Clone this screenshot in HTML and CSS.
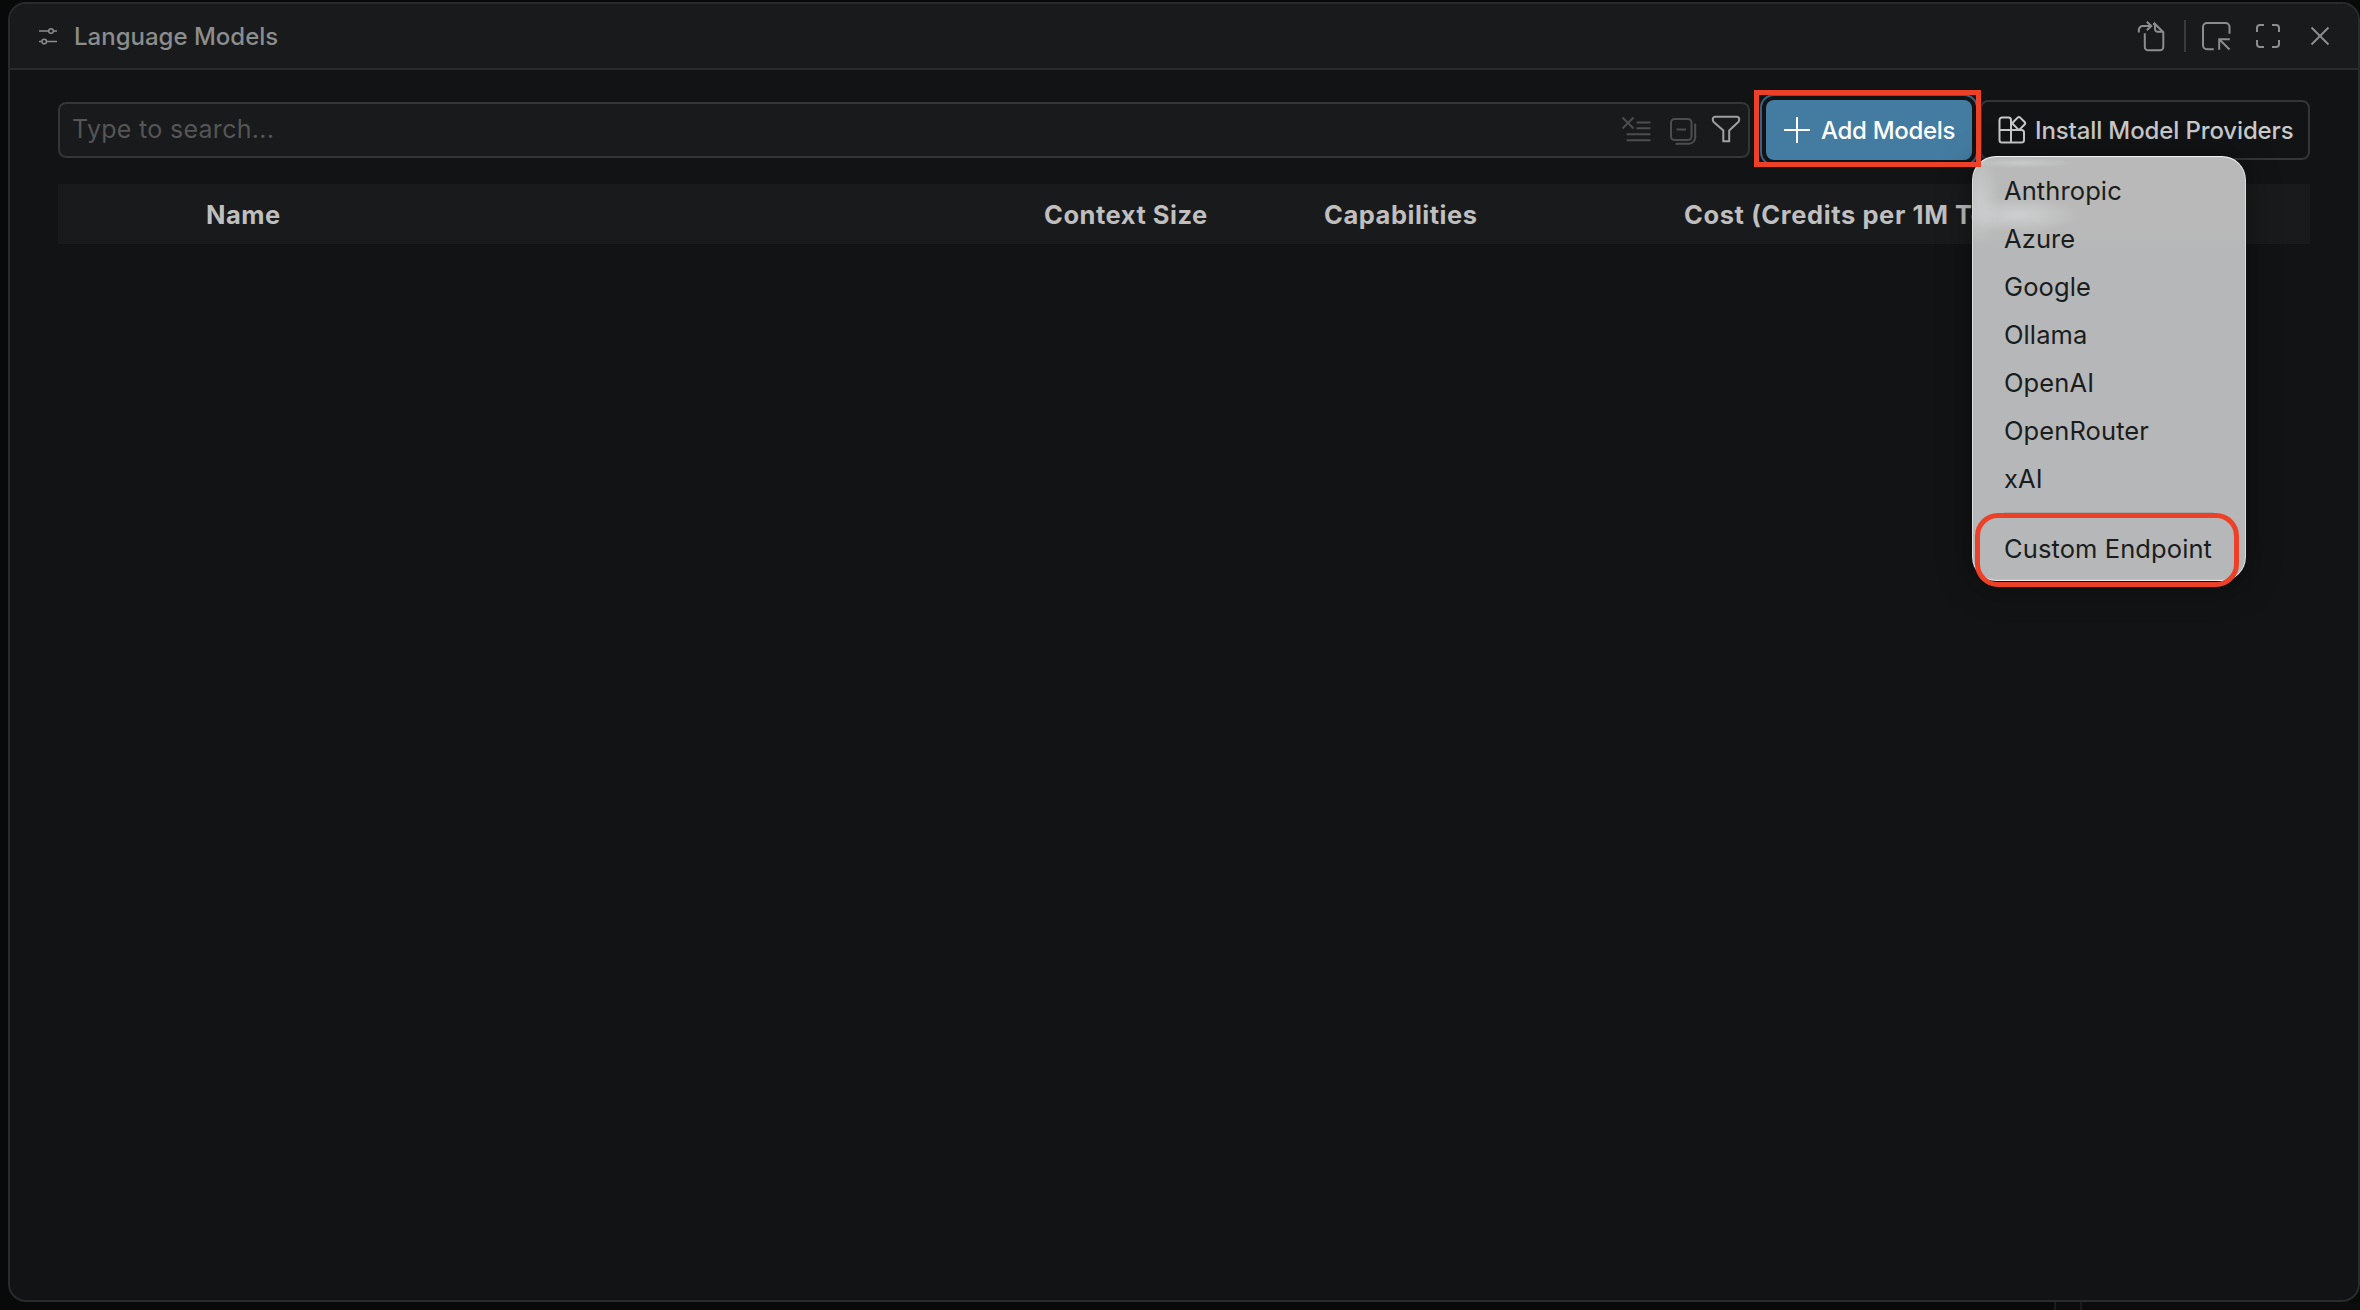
FILE: index.html
```html
<!DOCTYPE html>
<html lang="en">
<head>
<meta charset="utf-8">
<title>Language Models</title>
<link rel="stylesheet" href="styles.css">
</head>
<body>
<div class="window">
  <header class="titlebar">
    <svg class="title-icon" width="20" height="18" viewBox="0 0 20 18"><path d="M1 4h9.500M15.500 4H19M1 14.500h2.500M9 14.500h10"/><circle cx="13" cy="4" r="2.300"/><circle cx="6.200" cy="14.500" r="2.300"/></svg>
    <h1 class="title">Language Models</h1>
    <div class="actions">
      <svg class="act" width="30" height="34" viewBox="0 0 30 34"><path d="M2.800 13.500V11a4 4 0 0 1 4-4H15M10.800 2.800l4.500 4.200-4.500 4.200M8.800 14.300V28a3.300 3.300 0 0 0 3.300 3.300H24a3.300 3.300 0 0 0 3.300-3.300V13.200L19 5v5.300a2.500 2.500 0 0 0 2.500 2.500h5.800M17 5h2"/></svg>
      <span class="divider"></span>
      <svg class="act" width="32" height="32" viewBox="0 0 32 32"><path d="M13.800 29.300H7A4 4 0 0 1 3 25.300V7a4 4 0 0 1 4-4h18.500a4 4 0 0 1 4 4v6.800M29.800 19.200H19.200V29.800M19.500 19.500L29.500 29.500"/></svg>
      <svg class="act frame-icon" width="26" height="26" viewBox="0 0 26 26"><path d="M2 9V5a3 3 0 0 1 3-3h4M17 2h4a3 3 0 0 1 3 3v4M24 17v4a3 3 0 0 1-3 3h-4M9 24H5a3 3 0 0 1-3-3v-4"/></svg>
      <svg class="act close-icon" width="20" height="20" viewBox="0 0 20 20"><path d="M1.500 1.500l17 17M18.500 1.500l-17 17"/></svg>
    </div>
  </header>
  <main class="content">
    <div class="toolbar">
      <div class="search">
        <span class="placeholder">Type to search...</span>
        <svg class="tool dim clear" width="30" height="28" viewBox="0 0 30 28"><path d="M1.500 2.500l11 11M12.500 2.500l-11 11M15.500 7.500h14M15.500 13.200h14M5.500 19.200h24M5.500 25.200h24"/></svg>
        <svg class="tool dim collapse" width="28" height="28" viewBox="0 0 28 28"><rect x="2" y="2" width="20.500" height="21" rx="3.500"/><path d="M7.500 12.500h9.500M26.200 6.500V20.500a6.200 6.200 0 0 1-6.200 6.200H6.500"/></svg>
        <svg class="tool filter" width="30" height="28" viewBox="0 0 30 28"><path d="M4.200 1.800H26a2.200 2.200 0 0 1 2.200 2.200v.8a3 3 0 0 1-.9 2.200L18.200 15.500V26.300H12.300V15.500L2.700 7A3 3 0 0 1 1.800 4.800V4A2.200 2.200 0 0 1 4.200 1.800Z"/></svg>
      </div>
      <div class="add-wrap">
        <button class="btn add"><svg width="26" height="26" viewBox="0 0 26 26"><path d="M13 0v26M0 13h26"/></svg><span>Add Models</span></button>
        <div class="menu">
          <div class="item">Anthropic</div>
          <div class="item">Azure</div>
          <div class="item">Google</div>
          <div class="item">Ollama</div>
          <div class="item">OpenAI</div>
          <div class="item">OpenRouter</div>
          <div class="item">xAI</div>
          <div class="separator"></div>
          <div class="item">Custom Endpoint</div>
          <div class="callout callout-item"></div>
        </div>
        <div class="callout callout-button"></div>
      </div>
      <button class="btn install"><svg width="30" height="30" viewBox="0 0 30 30"><path d="M14 15V5a2.500 2.500 0 0 0-2.500-2.500H5A2.500 2.500 0 0 0 2.500 5V25A2.500 2.500 0 0 0 5 27.500H24.500A2.500 2.500 0 0 0 27 25V17.500A2.500 2.500 0 0 0 24.500 15H2.500M14 15V27.500M20.700 2.600a1.800 1.800 0 0 1 2.500 0L27.600 7a1.800 1.800 0 0 1 0 2.500L23.200 13.900a1.800 1.800 0 0 1-2.500 0L16.300 9.500a1.800 1.800 0 0 1 0-2.500Z"/></svg><span>Install Model Providers</span></button>
    </div>
    <div class="table-head">
      <span>Name</span><span>Context Size</span><span>Capabilities</span><span class="cost">Cost (Credits per 1M To</span>
    </div>
  </main>
</div>
<footer class="backdrop"><span class="sash"></span></footer>
</body>
</html>
```
FILE: styles.css
```css
* { box-sizing: border-box; }
body {
  margin: 0;
  width: 2360px;
  height: 1310px;
  padding-top: 2px;
  overflow: hidden;
  background: #080909;
  font-family: "Inter", sans-serif;
}
svg { display: block; flex: none; fill: none; stroke: currentColor; stroke-width: 2; }
.window {
  height: 1300px;
  margin-left: 8px;
  border: 2px solid #2a2b2c;
  border-radius: 18px;
  background: #121314;
}
.titlebar {
  display: flex;
  align-items: center;
  height: 66px;
  padding: 0 28px 0 28px;
  border-bottom: 2px solid #2a2b2c;
  border-radius: 16px 16px 0 0;
  background: #191a1b;
  color: #8c8d8d;
}
.title-icon { stroke-width: 1.5; }
.title {
  margin: 2px 0 0 16px;
  font-size: 24px;
  line-height: 32px;
  font-weight: 500;
}
.actions { display: flex; align-items: center; margin-left: auto; }
.divider { width: 2px; height: 32px; margin: 0 14px 0 18px; background: #3a3b3c; }
.frame-icon { margin-left: 23px; }
.close-icon { margin-left: 29px; }
.content { padding: 30px 48px; }
.toolbar { display: flex; align-items: center; height: 60px; }
.search {
  display: flex;
  align-items: center;
  flex: 1;
  height: 56px;
  margin-right: 16px;
  padding: 0 7px 0 12px;
  border: 2px solid #333536;
  border-radius: 8px;
  background: #191a1b;
}
.placeholder {
  flex: 1;
  margin-top: -2px;
  color: #555555;
  font-size: 25px;
  letter-spacing: 0.3px;
}
.tool { color: #a0a0a0; }
.dim { color: #4c4d4e; }
.clear { margin-top: -3px; }
.collapse { margin-left: 18px; margin-top: 1px; }
.filter { margin-left: 14px; margin-top: -2px; }
.add-wrap { position: relative; margin-right: 8px; }
.btn {
  display: flex;
  align-items: center;
  height: 60px;
  border-radius: 8px;
  font-family: inherit;
  font-size: 24px;
  line-height: 32px;
  font-weight: 500;
  white-space: nowrap;
}
.btn span { padding-top: 2px; }
.add {
  width: 206px;
  padding: 0 0 1px 18px;
  gap: 11px;
  border: 0;
  background: #447ca1;
  color: #ffffff;
  letter-spacing: -0.3px;
  outline: 2px solid #356486;
  outline-offset: 4px;
}
.install {
  width: 330px;
  padding: 0 0 0 15px;
  gap: 8px;
  border: 2px solid #333536;
  background: transparent;
  color: #c8c9ca;
  font-weight: 450;
  letter-spacing: -0.12px;
}
.table-head {
  display: grid;
  grid-template-columns: 838px 280px 360px 1fr;
  align-items: center;
  height: 60px;
  margin-top: 24px;
  padding-left: 148px;
  background: #191a1b;
  color: #bfbfbf;
  font-size: 25.5px;
  font-weight: 700;
  letter-spacing: 0.52px;
  white-space: nowrap;
}
.cost { width: 289px; overflow: hidden; letter-spacing: 0.6px; }
.menu {
  position: absolute;
  left: 206px;
  top: 56px;
  z-index: 2;
  width: 274px;
  height: 425px;
  padding: 11px 0 0 32px;
  border-radius: 24px;
  background:
    radial-gradient(ellipse 54px 5px at 50px 7px, rgba(220, 221, 223, 0.45), transparent),
    radial-gradient(ellipse 62px 18px at 46px 59px, rgba(214, 215, 217, 0.75), transparent),
    radial-gradient(ellipse 20px 45px at 8px 44px, rgba(208, 209, 211, 0.7), transparent),
    linear-gradient(#b8b9b8, #b8b9b8 80px, #b6b7b9 95px);
  box-shadow:
    inset 0 2px 1px -1px #f2f2f2,
    inset 0 -2px 1px -1px #eeeeee,
    inset 0 0 0 1px #dcdddd,
    0 4px 34px rgba(0, 0, 0, 0.4);
}
.item {
  height: 48px;
  color: #1b1c1c;
  font-size: 25.5px;
  line-height: 48px;
  letter-spacing: 0.1px;
  white-space: nowrap;
}
.separator { height: 2px; width: 210px; margin: 9px 0 11px; background: #a4a6a6; }
.callout { position: absolute; border: 5px solid #ec4128; pointer-events: none; }
.callout-button { left: -12px; top: -10px; z-index: 3; width: 227px; height: 77px; }
.callout-item { left: 3px; top: 357px; width: 264px; height: 74px; border-radius: 23px; }
.backdrop { display: flex; height: 8px; padding-left: 2054px; background: linear-gradient(90deg, #080909 2054px, #0c0c0c 2054px); }
.sash { width: 28px; border: solid #1a1b1b; border-width: 0 2px; }
```
